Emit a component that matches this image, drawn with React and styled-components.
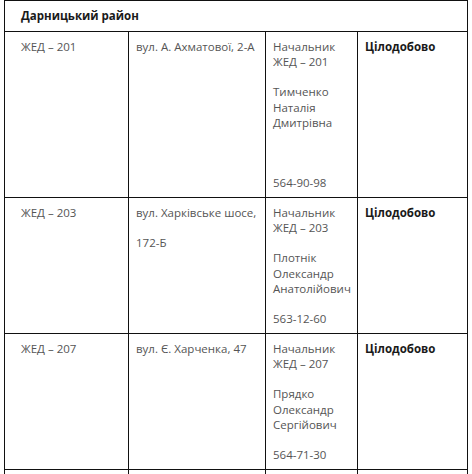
import React from 'react';
import styled, { createGlobalStyle } from 'styled-components';

const GlobalStyle = createGlobalStyle`
  body {
    margin: 0;
    background: #fff;
    font-family: "Open Sans", "Liberation Sans", sans-serif;
  }
`;

const rows = [
  {
    office: 'ЖЕД – 201',
    address: ['вул. А. Ахматової, 2-А'],
    head: [['Начальник', 'ЖЕД – 201'], ['Тимченко', 'Наталія', 'Дмитрівна'], [''], ['564-90-98']],
    hours: 'Цілодобово',
  },
  {
    office: 'ЖЕД – 203',
    address: ['вул. Харківське шосе,', '172-Б'],
    head: [['Начальник', 'ЖЕД – 203'], ['Плотнік', 'Олександр', 'Анатолійович'], ['563-12-60']],
    hours: 'Цілодобово',
  },
  {
    office: 'ЖЕД – 207',
    address: ['вул. Є. Харченка, 47'],
    head: [['Начальник', 'ЖЕД – 207'], ['Прядко', 'Олександр', 'Сергійович'], ['564-71-30']],
    hours: 'Цілодобово',
  },
];

const Page = styled.div`
  padding: 0 5px 0 4px;
`;

const Table = styled.table`
  width: 463px;
  border-collapse: collapse;
  table-layout: fixed;
  font-size: 11.5px;
  line-height: 15.5px;
  color: #555;
`;

const Col = styled.col`
  width: ${(p) => p.w}px;
`;

const HeadCell = styled.th`
  border: 1px solid #111;
  padding: 7px 7px 7px 16px;
  text-align: left;
  font-weight: 700;
  color: #1a1a1a;
`;

const Cell = styled.td`
  border: 1px solid #111;
  vertical-align: top;
  padding: 7px 7px 6px ${(p) => (p.first ? 16 : 7)}px;
  font-weight: ${(p) => (p.bold ? 700 : 400)};
  color: ${(p) => (p.bold ? '#1a1a1a' : '#555')};
  height: ${(p) => p.h || 'auto'};
`;

const Para = styled.p`
  margin: 0 0 14.5px;
  min-height: 15.5px;

  &:last-child {
    margin-bottom: 0;
  }
`;

export default function App() {
  return (
    <Page>
      <GlobalStyle />
      <Table>
        <colgroup>
          <Col w={124} />
          <Col w={137} />
          <Col w={92} />
          <Col w={110} />
        </colgroup>
        <thead>
          <tr>
            <HeadCell colSpan={4}>Дарницький район</HeadCell>
          </tr>
        </thead>
        <tbody>
          {rows.map((r) => (
            <tr key={r.office}>
              <Cell first>{r.office}</Cell>
              <Cell>
                {r.address.map((a, i) => (
                  <Para key={i}>{a}</Para>
                ))}
              </Cell>
              <Cell>
                {r.head.map((lines, i) => (
                  <Para key={i}>
                    {lines.map((l, j) => (
                      <React.Fragment key={j}>
                        {j > 0 && <br />}
                        {l || '\u00a0'}
                      </React.Fragment>
                    ))}
                  </Para>
                ))}
              </Cell>
              <Cell bold>{r.hours}</Cell>
            </tr>
          ))}
          <tr>
            <Cell first h="40px" />
            <Cell />
            <Cell />
            <Cell />
          </tr>
        </tbody>
      </Table>
    </Page>
  );
}
